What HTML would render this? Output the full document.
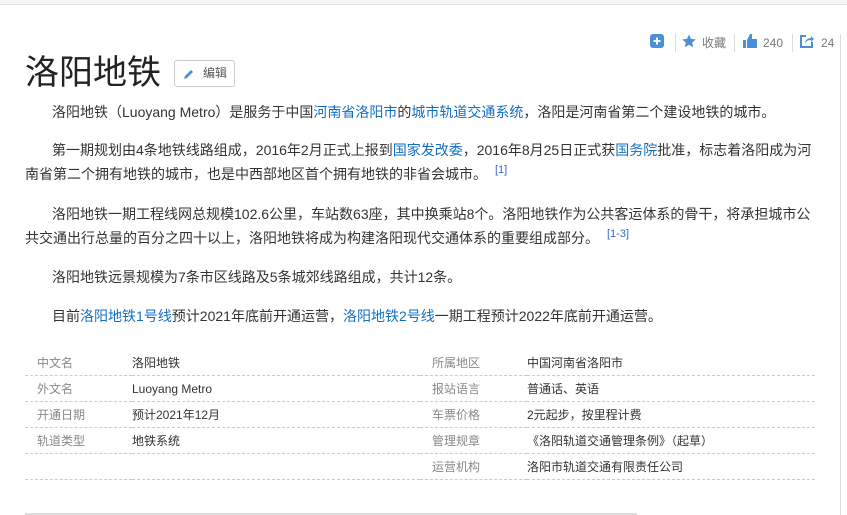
<!DOCTYPE html>
<html><head><meta charset="utf-8"><style>
body{margin:0;width:847px;height:515px;overflow:hidden;background:#fff;font-family:"Liberation Sans","Noto Sans CJK SC",sans-serif;color:#333;position:relative}
.top{position:absolute;left:0;top:0;width:847px;height:4px;background:#f5f5f5;border-bottom:1px solid #e0e0e0}
.edge{position:absolute;left:840px;top:34px;width:1px;height:481px;background:#ddd}
.tools{position:absolute;top:34px;left:650px;font-size:12px;color:#777;height:18px;line-height:18px}
.tools span{position:absolute;white-space:nowrap}
.sep{position:absolute;top:0;width:1px;height:18px;background:#ddd}
h1{position:absolute;left:25px;top:50px;margin:0;font-size:34px;font-weight:normal;color:#222;line-height:46px}
.edit{position:absolute;left:174px;top:60px;width:61px;height:27px;border:1px solid #ccc;border-radius:3px;box-sizing:border-box;font-size:12px;color:#555;line-height:25px}
.p{position:absolute;left:25px;width:792px;font-size:14px;line-height:24px;text-indent:27px;margin:0}
a{color:#136ec2;text-decoration:none}
sup{color:#3366cc;font-size:11px;margin-left:8px;vertical-align:6px;line-height:0}
table{position:absolute;left:25px;top:350px;width:790px;border-collapse:collapse;font-size:12px}
td{height:25px;border-bottom:1px dashed #ccc;padding:0;vertical-align:middle}
.l{color:#888;padding-left:12px;width:95px}
</style></head><body>
<div class="top"></div><div class="edge"></div>
<div class="tools">
<span style="left:0;top:0"><svg width="14" height="14" viewBox="0 0 14 14"><rect x="0" y="0" width="14" height="14" rx="3" fill="#4a90d9"/><path d="M7 3.5v7M3.5 7h7" stroke="#fff" stroke-width="2"/></svg></span>
<div class="sep" style="left:25px"></div>
<span style="left:32px;top:0"><svg width="14" height="14" viewBox="0 0 14 14"><path d="M7 .5l2 4.4 4.8.5-3.6 3.2 1 4.7L7 10.9l-4.2 2.4 1-4.7L.2 5.4 5 4.9z" fill="#4a90d9"/></svg></span>
<span style="left:52px;top:0">收藏</span>
<div class="sep" style="left:84px"></div>
<span style="left:93px;top:0"><svg width="14" height="14" viewBox="0 0 14 14"><rect x="0" y="6" width="3" height="8" fill="#4a90d9"/><path d="M4 6l3-6h2v5h5v9H4z" fill="#4a90d9"/></svg></span>
<span style="left:113px;top:0">240</span>
<div class="sep" style="left:142px"></div>
<span style="left:150px;top:0"><svg width="14" height="14" viewBox="0 0 14 14"><path d="M6 2H1v11h11V8" stroke="#4a90d9" stroke-width="2" fill="none"/><path d="M5 10c0-4 3-6 6-6V2l3 3-3 3V6c-3 0-5 1-6 4z" fill="#4a90d9"/></svg></span>
<span style="left:171px;top:0">24</span>
</div>
<h1>洛阳地铁</h1>
<div class="edit"><svg width="12" height="12" viewBox="0 0 12 12" style="position:absolute;left:8px;top:7px"><path d="M1 11l1-3 6-6 2 2-6 6z" fill="#4a90d9"/></svg><span style="position:absolute;left:28px">编辑</span></div>
<p class="p" style="top:100px">洛阳地铁（Luoyang Metro）是服务于中国<a>河南省洛阳市</a>的<a>城市轨道交通系统</a>，洛阳是河南省第二个建设地铁的城市。</p>
<p class="p" style="top:138px">第一期规划由4条地铁线路组成，2016年2月正式上报到<a>国家发改委</a>，2016年8月25日正式获<a>国务院</a>批准，标志着洛阳成为河南省第二个拥有地铁的城市，也是中西部地区首个拥有地铁的非省会城市。<sup>[1]</sup></p>
<p class="p" style="top:202px">洛阳地铁一期工程线网总规模102.6公里，车站数63座，其中换乘站8个。洛阳地铁作为公共客运体系的骨干，将承担城市公共交通出行总量的百分之四十以上，洛阳地铁将成为构建洛阳现代交通体系的重要组成部分。<sup>[1-3]</sup></p>
<p class="p" style="top:265px">洛阳地铁远景规模为7条市区线路及5条城郊线路组成，共计12条。</p>
<p class="p" style="top:304px">目前<a>洛阳地铁1号线</a>预计2021年底前开通运营，<a>洛阳地铁2号线</a>一期工程预计2022年底前开通运营。</p>
<table>
<tr><td class="l">中文名</td><td style="width:288px">洛阳地铁</td><td class="l">所属地区</td><td>中国河南省洛阳市</td></tr>
<tr><td class="l">外文名</td><td>Luoyang Metro</td><td class="l">报站语言</td><td>普通话、英语</td></tr>
<tr><td class="l">开通日期</td><td>预计2021年12月</td><td class="l">车票价格</td><td>2元起步，按里程计费</td></tr>
<tr><td class="l">轨道类型</td><td>地铁系统</td><td class="l">管理规章</td><td>《洛阳轨道交通管理条例》（起草）</td></tr>
<tr><td class="l"></td><td></td><td class="l">运营机构</td><td>洛阳市轨道交通有限责任公司</td></tr>
</table>
<div style="position:absolute;left:25px;top:513px;width:612px;height:2px;background:#ddd"></div>
</body></html>
